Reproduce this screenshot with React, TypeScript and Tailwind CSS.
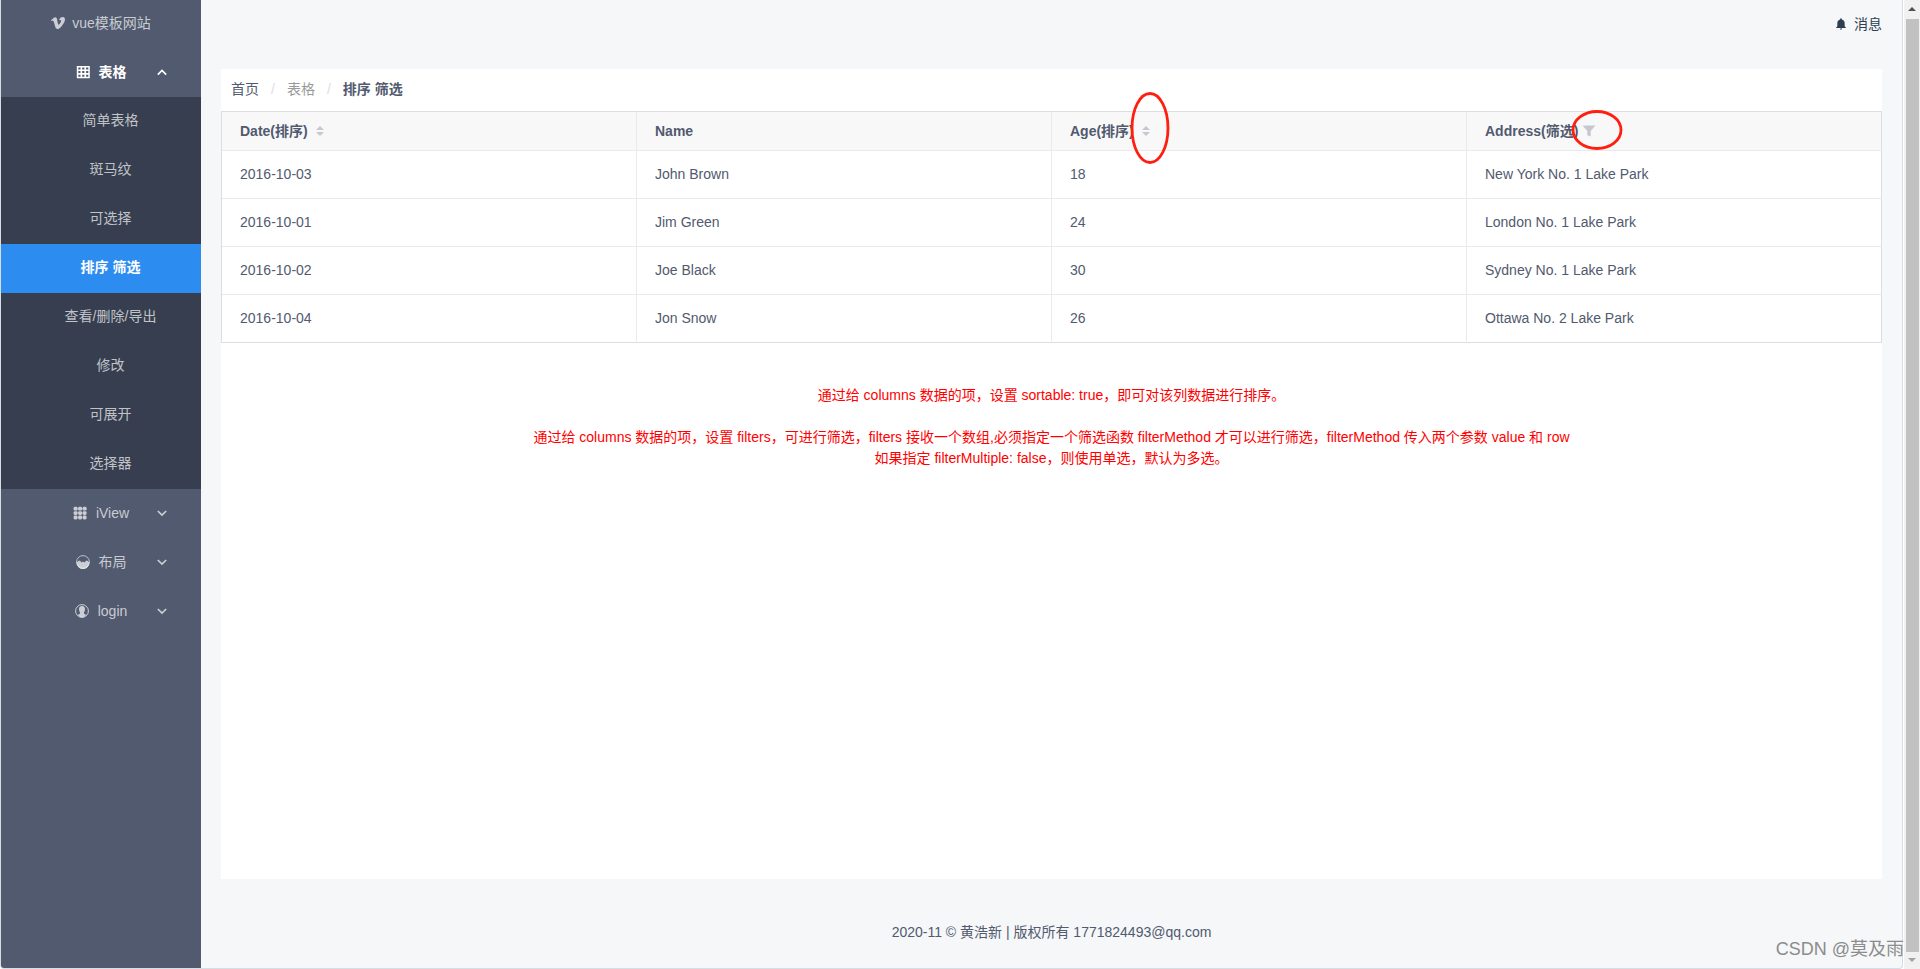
import React, { useState } from "react";
import { FaVimeoV } from "react-icons/fa";
import { IoMdNotifications } from "react-icons/io";

const menuTitle = "flex items-center w-full h-[49px] px-6 pb-px gap-[9px] relative justify-center cursor-pointer";
const subItem = "block h-[49px] pl-[43px] pr-6 text-center leading-[47px]";
const subActive = `${subItem} bg-[#2d8cf0] text-white font-bold`;
const subNormal = `${subItem} text-white/70 hover:text-white`;

type Row = { date: string; name: string; age: number; address: string };
type SortKey = "date" | "age";

const rows: Row[] = [
  { date: "2016-10-03", name: "John Brown", age: 18, address: "New York No. 1 Lake Park" },
  { date: "2016-10-01", name: "Jim Green", age: 24, address: "London No. 1 Lake Park" },
  { date: "2016-10-02", name: "Joe Black", age: 30, address: "Sydney No. 1 Lake Park" },
  { date: "2016-10-04", name: "Jon Snow", age: 26, address: "Ottawa No. 2 Lake Park" },
];

const tableMenu = ["简单表格", "斑马纹", "可选择", "排序 筛选", "查看/删除/导出", "修改", "可展开", "选择器"];

const cells = [0, 1, 2].flatMap(y => [0, 1, 2].map(x => ({ x, y })));

function GridIcon() {
  return (
    <svg viewBox="0 0 14 14" className="w-[14px] h-[14px]">
      <path
        fill="currentColor"
        fillRule="evenodd"
        d="M0.8 1H13.8V13.2H0.8Z M2.3 2.5V4.5H4.5V2.5Z M6.2 2.5V4.5H8.4V2.5Z M10.1 2.5V4.5H12.3V2.5Z M2.3 6.1V8.1H4.5V6.1Z M6.2 6.1V8.1H8.4V6.1Z M10.1 6.1V8.1H12.3V6.1Z M2.3 9.7V11.7H4.5V9.7Z M6.2 9.7V11.7H8.4V9.7Z M10.1 9.7V11.7H12.3V9.7Z"
      />
    </svg>
  );
}

function KeypadIcon() {
  return (
    <svg viewBox="0 0 14 14" className="w-[14px] h-[14px]" fill="currentColor">
      {cells.map(c => (
        <rect key={`${c.x}-${c.y}`} x={0.6 + c.x * 4.5} y={0.8 + c.y * 4.4} width="4" height="3.8" rx="1.4" />
      ))}
    </svg>
  );
}

function LayoutIcon() {
  return (
    <svg viewBox="0 0 14 14" className="w-[14px] h-[14px]" fill="none">
      <circle cx="7" cy="7" r="6.4" stroke="currentColor" strokeWidth="0.9" />
      <path d="M0.6 7.6 L2.4 6 L3.8 5.6 L5.6 7.6 L7 6.6 L8.4 7.6 L10.4 5.6 L11.8 6 L13.4 7.6 A6.4 6.4 0 0 1 0.6 7.6Z" fill="currentColor" />
    </svg>
  );
}

function ContactIcon() {
  return (
    <svg viewBox="0 0 14 14" className="w-[14px] h-[14px]" fill="none">
      <circle cx="7" cy="7" r="6.4" stroke="currentColor" strokeWidth="1" />
      <path
        d="M7 2 C9.2 2 10.1 3.4 10 5.2 C9.9 6.8 9.4 7.9 8.9 8.5 C8.9 9.9 9.4 10 11.2 10.9 C9.8 12.6 8.4 13.2 7 13.2 C5.6 13.2 4.2 12.6 2.8 10.9 C4.6 10 5.1 9.9 5.1 8.5 C4.6 7.9 4.1 6.8 4 5.2 C3.9 3.4 4.8 2 7 2Z"
        fill="currentColor"
      />
    </svg>
  );
}

function Chevron({ open = false }: { open?: boolean }) {
  return (
    <svg viewBox="0 0 14 14" className="absolute right-8 w-[14px] h-[14px]" fill="none" stroke="currentColor" strokeWidth="1.7">
      <path d={open ? "M2.8 9.6 L7 5.5 L11.2 9.6" : "M2.8 5 L7 9.1 L11.2 5"} />
    </svg>
  );
}

function SortButton({ label, onClick }: { label: string; onClick: () => void }) {
  return (
    <button aria-label={label} onClick={onClick} className="text-[#c5c8ce] cursor-pointer">
      <svg viewBox="0 0 8 10" className="w-2 h-[10px]" fill="currentColor">
        <path d="M4 0 L8 4 H0Z" />
        <path d="M4 10 L0 6 H8Z" />
      </svg>
    </button>
  );
}

function Sidebar() {
  return (
    <aside className="w-[200px] shrink-0 bg-[#515a6e] text-white/70">
      <div className="flex items-center justify-center gap-[7px] h-12 pb-0.5">
        <FaVimeoV className="w-[14px] h-4" />
        <span>vue模板网站</span>
      </div>
      <nav>
        <button className={`${menuTitle} text-white font-bold`}>
          <GridIcon />
          表格
          <Chevron open />
        </button>
        <div className="bg-[#363e4f]">
          {tableMenu.map(m => (
            <a key={m} href="#" className={m === "排序 筛选" ? subActive : subNormal}>
              {m}
            </a>
          ))}
        </div>
        <button className={menuTitle}>
          <KeypadIcon />
          iView
          <Chevron />
        </button>
        <button className={menuTitle}>
          <LayoutIcon />
          布局
          <Chevron />
        </button>
        <button className={menuTitle}>
          <ContactIcon />
          login
          <Chevron />
        </button>
      </nav>
    </aside>
  );
}

function DataTable() {
  const [sortKey, setSortKey] = useState<SortKey | null>(null);
  const data = sortKey ? [...rows].sort((a, b) => (a[sortKey] > b[sortKey] ? 1 : -1)) : rows;

  const th = "h-[39px] px-[18px] text-left font-bold border-r border-b border-[#e8eaec] last:border-r-[#dcdee2]";
  const td = "h-12 px-[18px] border-r border-b border-[#e8eaec] last:border-r-[#dcdee2] group-last:border-b-[#dcdee2]";

  return (
    <table className="w-full table-fixed border-separate border-spacing-0 border-l border-t border-[#dcdee2]">
      <thead className="bg-[#f8f8f9]">
        <tr>
          <th className={th}>
            <div className="flex items-center gap-2">
              Date(排序)
              <SortButton label="按日期排序" onClick={() => setSortKey("date")} />
            </div>
          </th>
          <th className={th}>Name</th>
          <th className={th}>
            <div className="flex items-center gap-2">
              Age(排序)
              <span className="relative flex items-center">
                <SortButton label="按年龄排序" onClick={() => setSortKey("age")} />
                <svg viewBox="0 0 40 72" className="absolute -left-3 -top-[34px] w-10 h-[72px] max-w-none pointer-events-none" fill="none">
                  <ellipse cx="20" cy="36" rx="18" ry="34.5" stroke="#ff1f10" strokeWidth="2.8" />
                </svg>
              </span>
            </div>
          </th>
          <th className={th}>
            <div className="flex items-center gap-1">
              Address(筛选)
              <span className="relative flex items-center">
                <button aria-label="筛选地址" className="text-[#c5c8ce] cursor-pointer">
                  <svg viewBox="0 0 14 12" className="w-[14px] h-3" fill="currentColor">
                    <path d="M0.5 0.5 H13.5 L8.7 6 V11.5 L5.3 10.3 V6Z" />
                  </svg>
                </button>
                <svg viewBox="0 0 52 40" className="absolute -left-[11px] -top-[15px] w-[52px] h-10 max-w-none pointer-events-none" fill="none">
                  <ellipse cx="26" cy="20" rx="24" ry="18.5" stroke="#ff1f10" strokeWidth="2.8" />
                </svg>
              </span>
            </div>
          </th>
        </tr>
      </thead>
      <tbody>
        {data.map(r => (
          <tr key={r.date} className="group">
            <td className={td}>{r.date}</td>
            <td className={td}>{r.name}</td>
            <td className={td}>{r.age}</td>
            <td className={td}>{r.address}</td>
          </tr>
        ))}
      </tbody>
    </table>
  );
}

function Scrollbar() {
  return (
    <div className="flex flex-col items-center w-4 shrink-0 bg-[#f1f1f1]">
      <svg viewBox="0 0 16 19" className="w-4 h-[19px]">
        <path d="M8 7 L12 11 H4Z" fill="#505050" />
      </svg>
      <div className="flex-1 w-[13px] bg-[#c1c1c1]" />
      <svg viewBox="0 0 16 17" className="w-4 h-[17px]">
        <path d="M8 10 L12 6 H4Z" fill="#a3a3a3" />
      </svg>
    </div>
  );
}

export default function App() {
  return (
    <div className="relative flex min-h-screen bg-white text-[14px] leading-[21px] text-[#515a6e] font-['Liberation_Sans','Noto_Sans_CJK_SC',sans-serif]">
      <div className="flex flex-1 mr-px border border-t-0 border-[#d7dde4] rounded-b bg-[#f5f7f9] overflow-hidden">
        <Sidebar />
        <div className="flex flex-col flex-1 px-5">
          <header className="flex items-center justify-end h-12 text-[#2c3e50]">
            <a href="#" className="flex items-center gap-[6px]">
              <IoMdNotifications className="w-[14px] h-[14px]" />
              消息
            </a>
          </header>
          <main className="flex-1 mt-[21px] bg-white">
            <nav className="flex items-center h-[42px] px-[10px] pb-0.5">
              <a href="#">首页</a>
              <span className="mx-3 text-[#dcdee2]">/</span>
              <span className="text-[#999999]">表格</span>
              <span className="mx-3 text-[#dcdee2]">/</span>
              <span className="font-bold">排序 筛选</span>
            </nav>
            <DataTable />
            <div className="mt-[42px] text-center text-[#ff0000]">
              <p>通过给 columns 数据的项，设置 sortable: true，即可对该列数据进行排序。</p>
              <p className="mt-[21px]">
                通过给 columns 数据的项，设置 filters，可进行筛选，filters 接收一个数组,必须指定一个筛选函数 filterMethod 才可以进行筛选，filterMethod 传入两个参数 value 和 row
              </p>
              <p>如果指定 filterMultiple: false，则使用单选，默认为多选。</p>
            </div>
          </main>
          <footer className="flex items-center justify-center h-[89px] pt-[18px]">
            2020-11 © 黄浩新 | 版权所有 1771824493@qq.com
          </footer>
        </div>
      </div>
      <Scrollbar />
      <span className="absolute right-4 bottom-2 text-[18px] leading-6 text-[#8c8c8c]">CSDN @莫及雨</span>
    </div>
  );
}
